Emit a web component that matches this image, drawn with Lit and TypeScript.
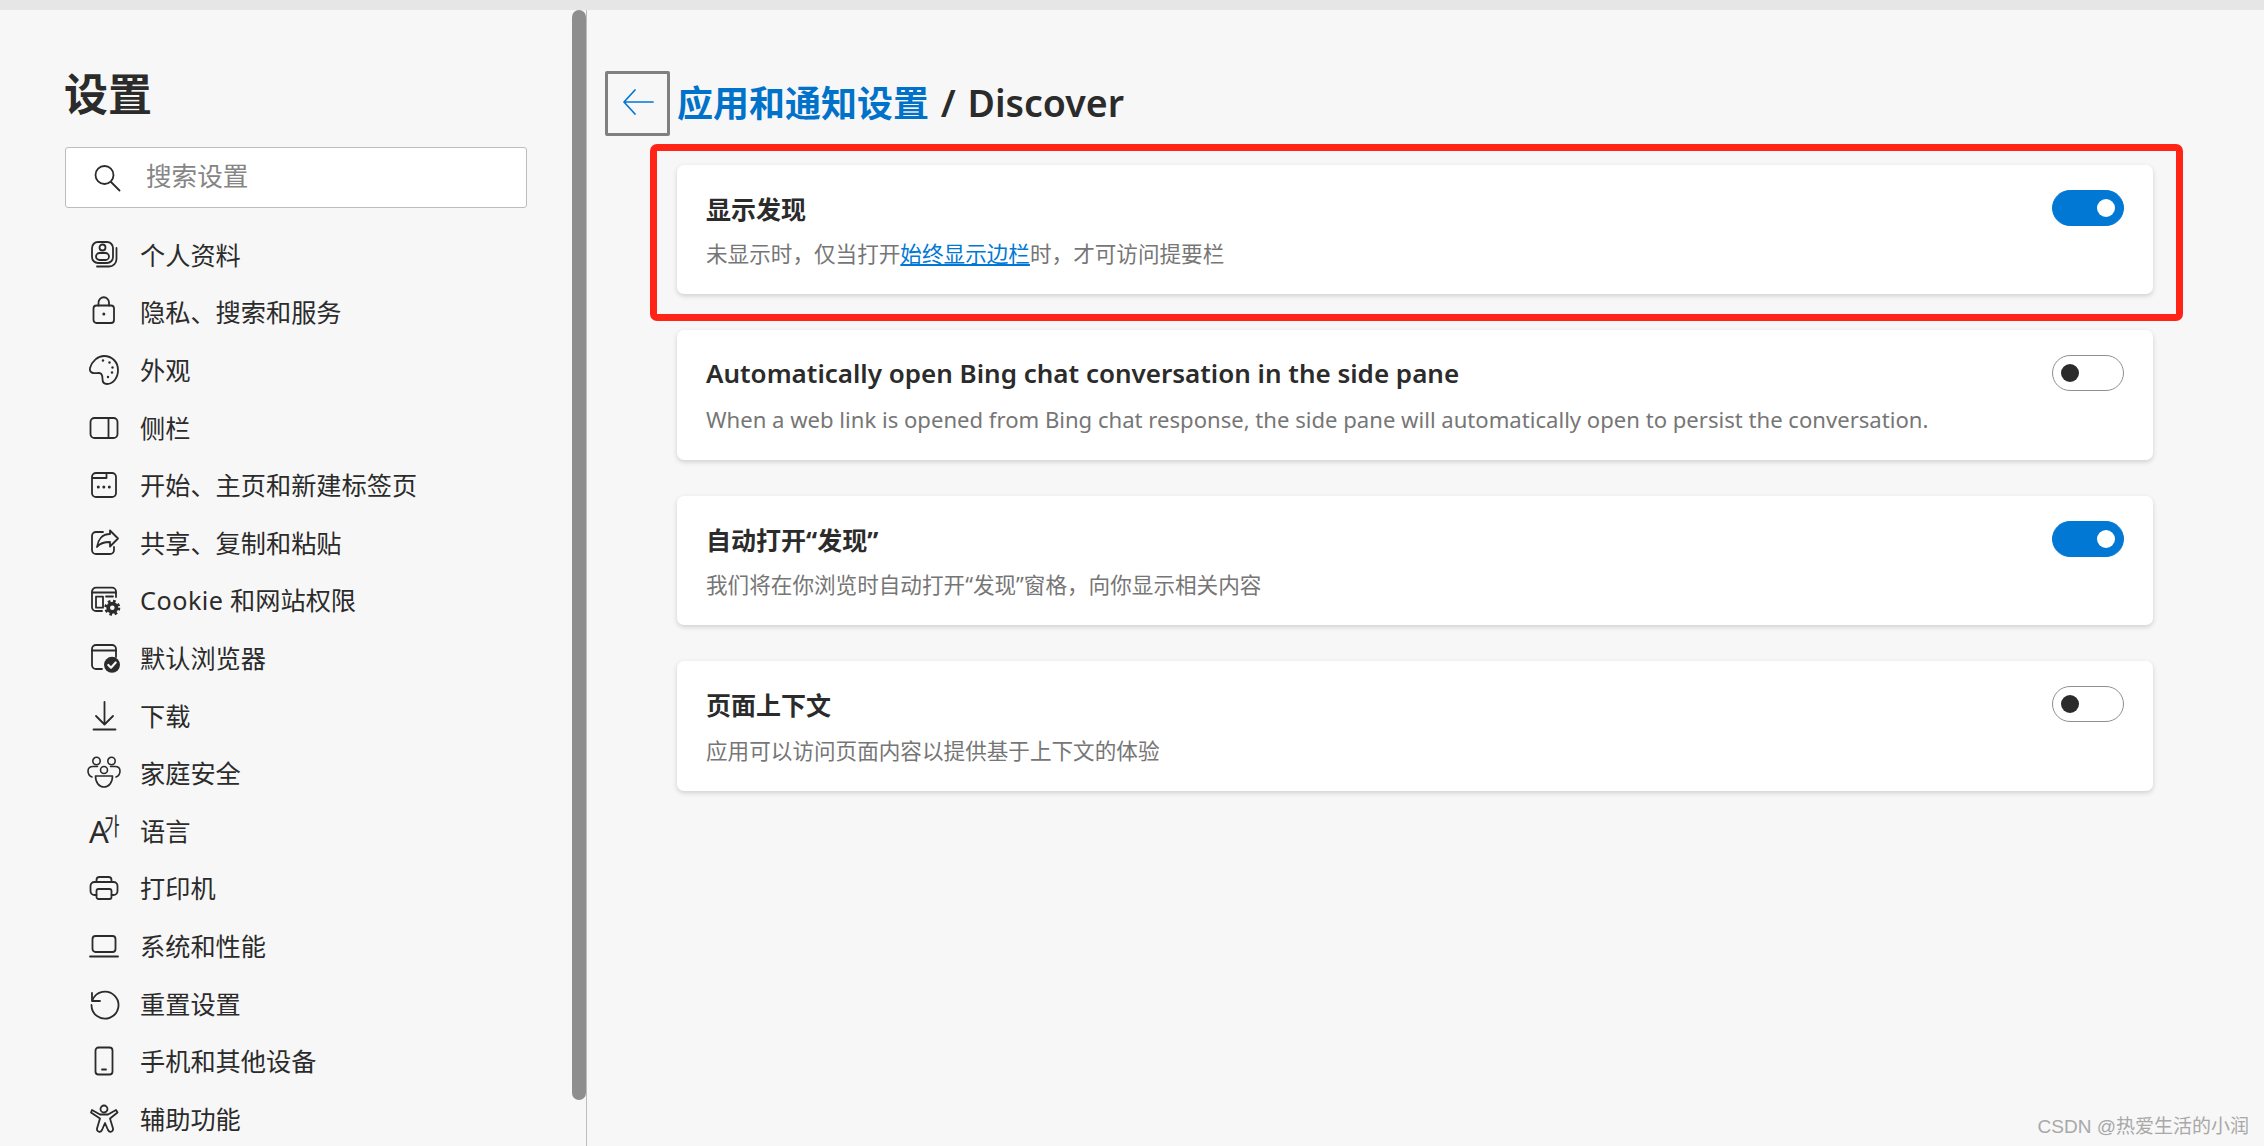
import { LitElement, html, css, svg } from "lit";
import { customElement } from "lit/decorators.js";

const gear = svg`<circle cx="23.300" cy="22.700" r="6" fill="currentColor" stroke="none"/><circle cx="23.300" cy="22.700" r="6.500" stroke-width="3" stroke-dasharray="2.550 2.550" stroke-linecap="butt"/><circle cx="23.300" cy="22.700" r="2.300" fill="#f7f7f7" stroke="none"/>`;

const icons = [
  svg`<rect x="3" y="2" width="21" height="21" rx="6"/><path d="M27.500 8v11a7.500 7.500 0 0 1-7.500 7.500H8"/><circle cx="13.500" cy="7.500" r="3"/><rect x="7" y="13" width="13" height="7" rx="3.500"/>`,
  svg`<rect x="4.500" y="8.500" width="20.500" height="17.500" rx="3"/><path d="M9.500 8.500V5.500a5.250 5.250 0 0 1 10.500 0v3"/><circle cx="14.800" cy="17" r="1.500" fill="currentColor" stroke="none"/>`,
  svg`<path d="M1 13C3 6 9 1 15 1c8 0 14 6 14 14 0 8-5 14-11 14-3.500 0-4.500-2-4.500-5 0-3-.5-6-3.500-6-3 0-3.500.5-6 0-2.500-.5-3.500-2.500-3-5z"/><circle cx="14" cy="5.500" r="1.200" fill="currentColor" stroke="none"/><circle cx="20.500" cy="7.500" r="1.200" fill="currentColor" stroke="none"/><circle cx="23.500" cy="12.500" r="1.200" fill="currentColor" stroke="none"/><circle cx="23" cy="17.500" r="1.200" fill="currentColor" stroke="none"/><circle cx="19" cy="22" r="1.200" fill="currentColor" stroke="none"/>`,
  svg`<rect x="1.500" y="5" width="27" height="20" rx="4"/><path d="M19.500 5v20"/>`,
  svg`<path d="M3 8V7a4 4 0 0 1 4-4h16a4 4 0 0 1 4 4v16a4 4 0 0 1-4 4H7a4 4 0 0 1-4-4V8h14.500V3"/><circle cx="9.300" cy="17" r="1.500" fill="currentColor" stroke="none"/><circle cx="14.800" cy="17" r="1.500" fill="currentColor" stroke="none"/><circle cx="20.300" cy="17" r="1.500" fill="currentColor" stroke="none"/>`,
  svg`<path d="M14 4H7a4 4 0 0 0-4 4v14a4 4 0 0 0 4 4h14a4 4 0 0 0 4-4v-3"/><path d="M21 2.500l8 8-8 8V14c-5 0-10 1-13 5 1-7 5-13 13-13z"/>`,
  svg`<path d="M13 26H7a4 4 0 0 1-4-4V6.700a4 4 0 0 1 4-4h16a4 4 0 0 1 4 4V12"/><path d="M3 7.500h24"/><rect x="7" y="11.700" width="7" height="11"/><path d="M17 11.500h7"/>${gear}`,
  svg`<path d="M13 26H7a4 4 0 0 1-4-4V6a4 4 0 0 1 4-4h16a4 4 0 0 1 4 4v8"/><path d="M3 7.500h24"/><circle cx="23" cy="21.800" r="8" fill="currentColor" stroke="none"/><path d="M19.300 22l2.700 2.700 4.700-5.200" stroke="#f7f7f7" stroke-width="2.200"/>`,
  svg`<path d="M15.500 1v22M7 15l8.500 8.500L24 15"/><path d="M4.500 28.500h22"/>`,
  svg`<g stroke-width="1.600"><circle cx="7.500" cy="3" r="3.700"/><circle cx="22.500" cy="3" r="3.700"/><circle cx="15" cy="12" r="3.500"/><path d="M8.500 8.500H4C1 8.500-1 10-1 13c0 3 1.500 5 4 6"/><path d="M21.500 8.500H26c3 0 5 1.500 5 4.500 0 3-1.500 5-4 6"/><path d="M6.500 18h17c0 7-4 11-8.500 11s-8.500-4-8.500-11z"/></g>`,
  null,
  svg`<path d="M7.500 22H5.500a4 4 0 0 1-4-4v-5a4 4 0 0 1 4-4h19a4 4 0 0 1 4 4v5a4 4 0 0 1-4 4h-2"/><path d="M7.500 9V7a3 3 0 0 1 3-3h9a3 3 0 0 1 3 3v2"/><rect x="7.500" y="16" width="15" height="10" rx="2"/>`,
  svg`<rect x="3.500" y="5" width="23" height="16" rx="3"/><path d="M1 25.500h28"/>`,
  svg`<path d="M3 4v8h8"/><path d="M3.500 11a13.500 13.500 0 1 1-1 5"/>`,
  svg`<rect x="6.500" y="1.500" width="17" height="27" rx="3"/><path d="M13 23.500h4"/>`,
  svg`<circle cx="15" cy="5" r="3.500"/><path d="M3 6l8 4.500h8L27 6l1.500 2.500-7.500 6 3 10c.5 3.500-3.500 4.500-5 1.500l-3-7-3 7c-1.500 3-5.500 2-5-1.500l3-10L2 8.500z"/>`,
];

const navItems = [
  "个人资料", "隐私、搜索和服务", "外观", "侧栏", "开始、主页和新建标签页",
  "共享、复制和粘贴", html`<span class="cookie">Cookie</span> 和网站权限`, "默认浏览器", "下载", "家庭安全",
  "语言", "打印机", "系统和性能", "重置设置", "手机和其他设备", "辅助功能",
];

@customElement("app-root")
export class AppRoot extends LitElement {
  static styles = css`
    :host {
      display: block;
      position: relative;
      width: 2264px;
      height: 1146px;
      overflow: hidden;
      background: #f7f7f7;
      color: #2b2b2b;
      font-family: "Noto Sans", "Noto Sans CJK SC", sans-serif;
    }
    .topbar { height: 10px; background: #e6e6e6; }
    .body { display: flex; height: 1136px; }
    .sidebar {
      position: relative;
      box-sizing: border-box;
      width: 587px;
      flex: none;
      padding: 54px 59px 0 65px;
      border-right: 1px solid #bdbdbd;
    }
    .thumb {
      position: absolute;
      left: 572px;
      top: 0;
      width: 14px;
      height: 1090px;
      border-radius: 7px;
      background: #8e8e8e;
    }
    h1 {
      margin: 0 0 0 -1px;
      font-size: 44px;
      line-height: 60px;
      font-weight: 700;
    }
    .search {
      display: flex;
      align-items: center;
      box-sizing: border-box;
      height: 61px;
      margin-top: 23px;
      padding-left: 25px;
      gap: 23px;
      background: #fff;
      border: 1px solid #bdbdbd;
      border-radius: 3px;
      font-size: 25.6px;
      color: #858585;
    }
    .search span { padding-bottom: 5px; }
    .search svg { width: 32px; height: 32px; flex: none; color: #2b2b2b; }
    nav { margin-top: 18px; }
    .item {
      display: flex;
      align-items: center;
      gap: 21px;
      height: 57.6px;
      padding-left: 24px;
      font-size: 25.2px;
      white-space: nowrap;
    }
    .item > span { padding-bottom: 2px; }
    .cookie { letter-spacing: 0.5px; }
    .item svg {
      width: 30px;
      height: 30px;
      flex: none;
      overflow: visible;
      fill: none;
      stroke: currentColor;
      stroke-width: 1.8;
      stroke-linecap: round;
      stroke-linejoin: round;
    }
    .lang { position: relative; width: 30px; height: 30px; flex: none; }
    .lang b, .lang u {
      position: absolute;
      text-decoration: none;
      font-weight: 400;
    }
    .lang b { left: 0; top: 0; font-size: 31px; line-height: 30px; }
    .lang u {
      left: 15px;
      top: -3px;
      font-family: "Noto Sans CJK KR", sans-serif;
      font-size: 24px;
      line-height: 24px;
      transform: scaleX(0.7);
      transform-origin: left center;
    }
    main { flex: 1; padding: 61px 111px 0 18px; }
    .head { display: flex; align-items: center; gap: 7px; }
    .back {
      display: flex;
      align-items: center;
      justify-content: center;
      box-sizing: border-box;
      width: 65px;
      height: 65px;
      padding-bottom: 4px;
      border: 3px solid #808080;
      border-radius: 2px;
      color: #0078d4;
    }
    .back svg { width: 32px; height: 28px; }
    .crumb { font-size: 36px; font-weight: 600; white-space: nowrap; line-height: 50px; }
    .crumb a { color: #0072c9; font-weight: 700; text-decoration: none; }
    .crumb span { font-size: 37.5px; word-spacing: 2px; }
    .cards {
      display: flex;
      flex-direction: column;
      gap: 36px;
      margin: 29px 0 0 72px;
    }
    .card {
      display: flex;
      justify-content: space-between;
      align-items: flex-start;
      box-sizing: border-box;
      height: 129px;
      padding: 25px 29px 0;
      background: #fff;
      border-radius: 7px;
      box-shadow: 0 2px 5px rgba(0, 0, 0, 0.16);
    }
    .card:nth-child(even) { height: 130px; }
    .text { padding-top: 1px; }
    .title { font-size: 25px; line-height: 36px; font-weight: 700; }
    .title.latin { font-size: 26px; font-weight: 600; margin: -1px 0 1px; }
    .desc { margin-top: 9px; font-size: 21.6px; line-height: 36px; color: #767676; }
    .card:nth-child(even) .desc { margin-top: 10px; }
    .desc.latin { font-size: 22.1px; }
    .desc a { color: #0078d4; text-decoration: underline; }
    .toggle {
      display: flex;
      align-items: center;
      box-sizing: border-box;
      flex: none;
      width: 72px;
      height: 36px;
      padding: 0 8px;
      border-radius: 18px;
      border: 1px solid #8f8f8f;
      background: #fff;
    }
    .toggle i { width: 18px; height: 18px; border-radius: 50%; background: #2b2b2b; }
    .toggle.on {
      justify-content: flex-end;
      background: #0078d4;
      border-color: #0078d4;
    }
    .toggle.on i { background: #fff; }
    .annot {
      position: absolute;
      left: 650px;
      top: 144px;
      width: 1533px;
      height: 177px;
      box-sizing: border-box;
      border: 7px solid #ff2416;
      border-radius: 7px;
      pointer-events: none;
    }
    .mark {
      position: absolute;
      right: 15px;
      top: 1114px;
      font-family: "Liberation Sans", "Noto Sans CJK SC", sans-serif;
      font-size: 19px;
      line-height: 26px;
      color: #a8a8a8;
      white-space: nowrap;
    }
  `;

  private card(title: unknown, desc: unknown, on: boolean, latin = false) {
    return html`<div class="card">
      <div class="text">
        <div class="title ${latin ? "latin" : ""}">${title}</div>
        <div class="desc ${latin ? "latin" : ""}">${desc}</div>
      </div>
      <div class="toggle ${on ? "on" : ""}"><i></i></div>
    </div>`;
  }

  render() {
    return html`
      <div class="topbar"></div>
      <div class="body">
        <aside class="sidebar">
          <div class="thumb"></div>
          <h1>设置</h1>
          <div class="search">
            <svg viewBox="0 0 32 32" fill="none" stroke="currentColor" stroke-width="1.8" stroke-linecap="round">
              <circle cx="13.500" cy="13" r="9"/><path d="M20 20l8.500 8.500"/>
            </svg>
            <span>搜索设置</span>
          </div>
          <nav>
            ${navItems.map(
              (label, i) => html`<div class="item">
                ${icons[i]
                  ? html`<svg viewBox="0 0 30 30">${icons[i]}</svg>`
                  : html`<div class="lang"><b>A</b><u>가</u></div>`}
                <span>${label}</span>
              </div>`
            )}
          </nav>
        </aside>
        <main>
          <div class="head">
            <div class="back">
              <svg viewBox="0 0 32 28" fill="none" stroke="currentColor" stroke-width="1.7" stroke-linecap="round" stroke-linejoin="round">
                <path d="M31 14H2M13 2L2 14l11 12"/>
              </svg>
            </div>
            <div class="crumb"><a>应用和通知设置</a><span> / Discover</span></div>
          </div>
          <div class="cards">
            ${this.card(
              "显示发现",
              html`未显示时，仅当打开<a>始终显示边栏</a>时，才可访问提要栏`,
              true
            )}
            ${this.card(
              "Automatically open Bing chat conversation in the side pane",
              "When a web link is opened from Bing chat response, the side pane will automatically open to persist the conversation.",
              false,
              true
            )}
            ${this.card("自动打开“发现”", "我们将在你浏览时自动打开“发现”窗格，向你显示相关内容", true)}
            ${this.card("页面上下文", "应用可以访问页面内容以提供基于上下文的体验", false)}
          </div>
        </main>
      </div>
      <div class="annot"></div>
      <div class="mark">CSDN @热爱生活的小润</div>
    `;
  }
}
